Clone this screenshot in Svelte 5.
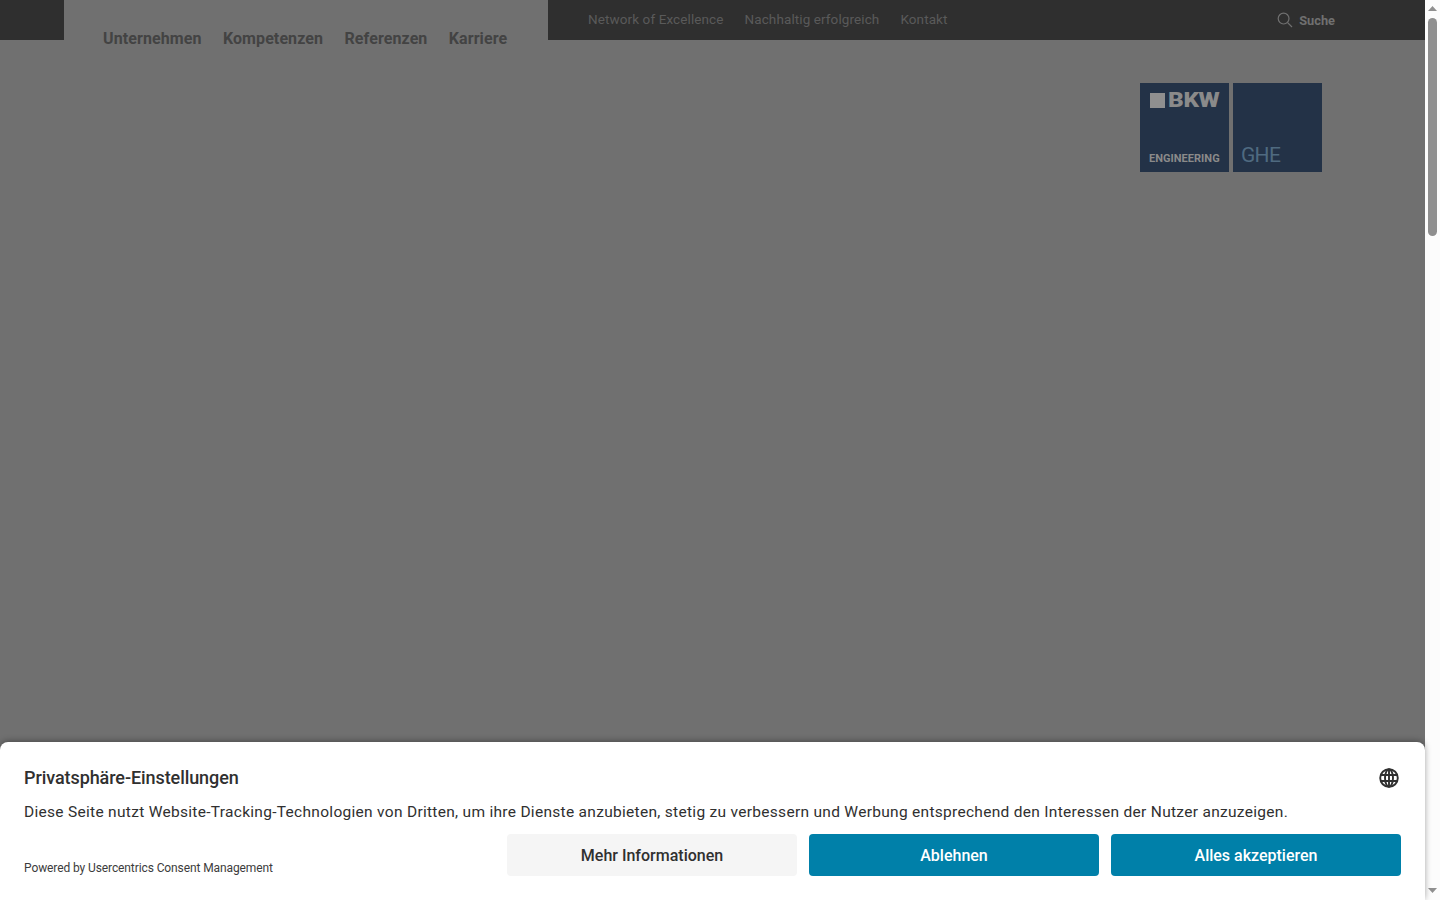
<script>
  const mainNav = ['Unternehmen', 'Kompetenzen', 'Referenzen', 'Karriere'];
  const metaNav = ['Network of Excellence', 'Nachhaltig erfolgreich', 'Kontakt'];
</script>

<div class="viewport">
  <div class="page">
    <header class="topbar">
      <nav class="main-nav">
        {#each mainNav as item}
          <a href="#top">{item}</a>
        {/each}
      </nav>
      <nav class="meta-nav">
        {#each metaNav as item}
          <a href="#top">{item}</a>
        {/each}
      </nav>
      <div class="search">
        <svg width="16" height="16" viewBox="0 0 16 16" fill="none" stroke="#707070" stroke-width="1.2">
          <circle cx="6.6" cy="6.6" r="5.4" />
          <path d="M10.6 10.6 15 15" />
        </svg>
        <span>Suche</span>
      </div>
    </header>
    <div class="logo-row">
      <div class="tile tile-bkw">
        <div class="bkw"><i></i><span>BKW</span></div>
        <span class="eng">ENGINEERING</span>
      </div>
      <div class="tile tile-ghe"><span>GHE</span></div>
    </div>
  </div>
  <aside class="scrollbar">
    <svg width="15" height="17" viewBox="0 0 15 17"><path d="M3 11 7.5 6 12 11Z" fill="#8f8f8f" /></svg>
    <div class="track"><div class="thumb"></div></div>
    <svg width="15" height="17" viewBox="0 0 15 17"><path d="M3 5 7.5 10 12 5Z" fill="#8f8f8f" /></svg>
  </aside>

  <section class="banner">
    <div class="head">
      <h2>Privatsphäre-Einstellungen</h2>
      <svg class="globe" width="20" height="20" viewBox="0 0 20 20" fill="none" stroke="#303030" stroke-width="1.9">
        <circle cx="10" cy="10" r="8.8" />
        <ellipse cx="10" cy="10" rx="4" ry="8.8" />
        <path d="M1.6 7h16.8M1.6 13h16.8M10 1.2v17.6" />
      </svg>
    </div>
    <p class="copy">Diese Seite nutzt Website-Tracking-Technologien von Dritten, um ihre Dienste anzubieten, stetig zu verbessern und Werbung entsprechend den Interessen der Nutzer anzuzeigen.</p>
    <div class="foot">
      <span class="powered">Powered by Usercentrics Consent Management</span>
      <div class="actions">
        <button class="light">Mehr Informationen</button>
        <button>Ablehnen</button>
        <button>Alles akzeptieren</button>
      </div>
    </div>
  </section>
</div>

<style>
  :global(body) {
    margin: 0;
    overflow: hidden;
    background: #fff;
    font-family: Roboto, "Liberation Sans", sans-serif;
  }
  .viewport {
    position: relative;
    display: flex;
    width: 1440px;
    height: 900px;
    overflow: hidden;
  }
  .page {
    width: 1425px;
    flex: none;
    background: #707070;
  }
  .topbar {
    display: flex;
    align-items: flex-start;
    height: 40px;
    padding-left: 64px;
    background: #2f2f2f;
  }
  .main-nav {
    display: flex;
    gap: 21.3px;
    box-sizing: border-box;
    width: 484px;
    height: 40px;
    padding: 29px 0 0 39px;
    background: #707070;
  }
  .main-nav a {
    color: #434343;
    font-size: 16px;
    font-weight: 700;
    line-height: 19px;
    letter-spacing: 0.1px;
    text-decoration: none;
  }
  .meta-nav {
    display: flex;
    gap: 21px;
    margin-left: 40px;
    padding-top: 11px;
  }
  .meta-nav a {
    color: #5a5a5a;
    font-size: 13.5px;
    line-height: 17px;
    letter-spacing: 0.1px;
    text-decoration: none;
  }
  .search {
    display: flex;
    align-items: center;
    gap: 6px;
    margin-left: auto;
    margin-right: 90px;
    height: 40px;
    color: #707070;
    font-size: 12.8px;
    font-weight: 700;
  }
  .logo-row {
    display: flex;
    justify-content: flex-end;
    gap: 4px;
    padding: 43px 103px 0 0;
  }
  .tile {
    display: flex;
    flex-direction: column;
    box-sizing: border-box;
    width: 89px;
    height: 89px;
    background: #233247;
  }
  .tile-bkw {
    padding: 10px 9px 7px;
    justify-content: space-between;
    align-items: flex-start;
    color: #8a8a8a;
  }
  .bkw {
    display: flex;
    align-items: center;
    gap: 3px;
    height: 15px;
    padding-left: 1px;
  }
  .bkw i {
    display: block;
    width: 15px;
    height: 15px;
    background: #8f8f8f;
  }
  .bkw span {
    font-size: 21px;
    font-weight: 900;
    line-height: 15px;
    letter-spacing: -0.3px;
    transform: scaleX(1.16);
    transform-origin: left center;
  }
  .eng {
    font-size: 11px;
    font-weight: 700;
    line-height: 13px;
    letter-spacing: 0.03px;
    white-space: nowrap;
  }
  .tile-ghe {
    justify-content: flex-end;
    padding: 0 0 5px 8px;
    color: #4f6a80;
    font-size: 21px;
    line-height: 24px;
    letter-spacing: -0.7px;
  }
  .scrollbar {
    display: flex;
    flex-direction: column;
    flex: 1;
    background: #fcfcfc;
  }
  .scrollbar svg {
    display: block;
    flex: none;
  }
  .track {
    flex: 1;
    padding: 1px 3px;
  }
  .thumb {
    height: 218px;
    border-radius: 5px;
    background: #8f8f8f;
  }
  .banner {
    position: absolute;
    left: 0;
    bottom: 0;
    box-sizing: border-box;
    width: 1425px;
    height: 158px;
    padding: 24px 24px 0;
    border-radius: 8px 8px 0 0;
    background: #fff;
    box-shadow: 0 -1px 6px rgba(0, 0, 0, 0.35);
    color: #303030;
  }
  .head {
    display: flex;
    justify-content: space-between;
    align-items: center;
    height: 24px;
    padding-right: 2px;
  }
  h2 {
    margin: 0;
    font-size: 18px;
    font-weight: 500;
    line-height: 24px;
    letter-spacing: -0.08px;
  }
  .copy {
    margin: 12px 0 0;
    font-size: 15.5px;
    line-height: 20px;
    letter-spacing: 0.295px;
    white-space: nowrap;
  }
  .foot {
    display: flex;
    justify-content: space-between;
    margin-top: 12px;
  }
  .powered {
    margin-top: 26px;
    font-size: 12px;
    line-height: 17px;
    letter-spacing: -0.1px;
    color: #3c3c3c;
  }
  .actions {
    display: flex;
    gap: 12px;
  }
  button {
    width: 290px;
    height: 42px;
    border: 0;
    border-radius: 4px;
    background: #0080a9;
    color: #fff;
    font: 500 16px Roboto, sans-serif;
  }
  button.light {
    background: #f5f5f5;
    color: #303030;
  }
</style>
